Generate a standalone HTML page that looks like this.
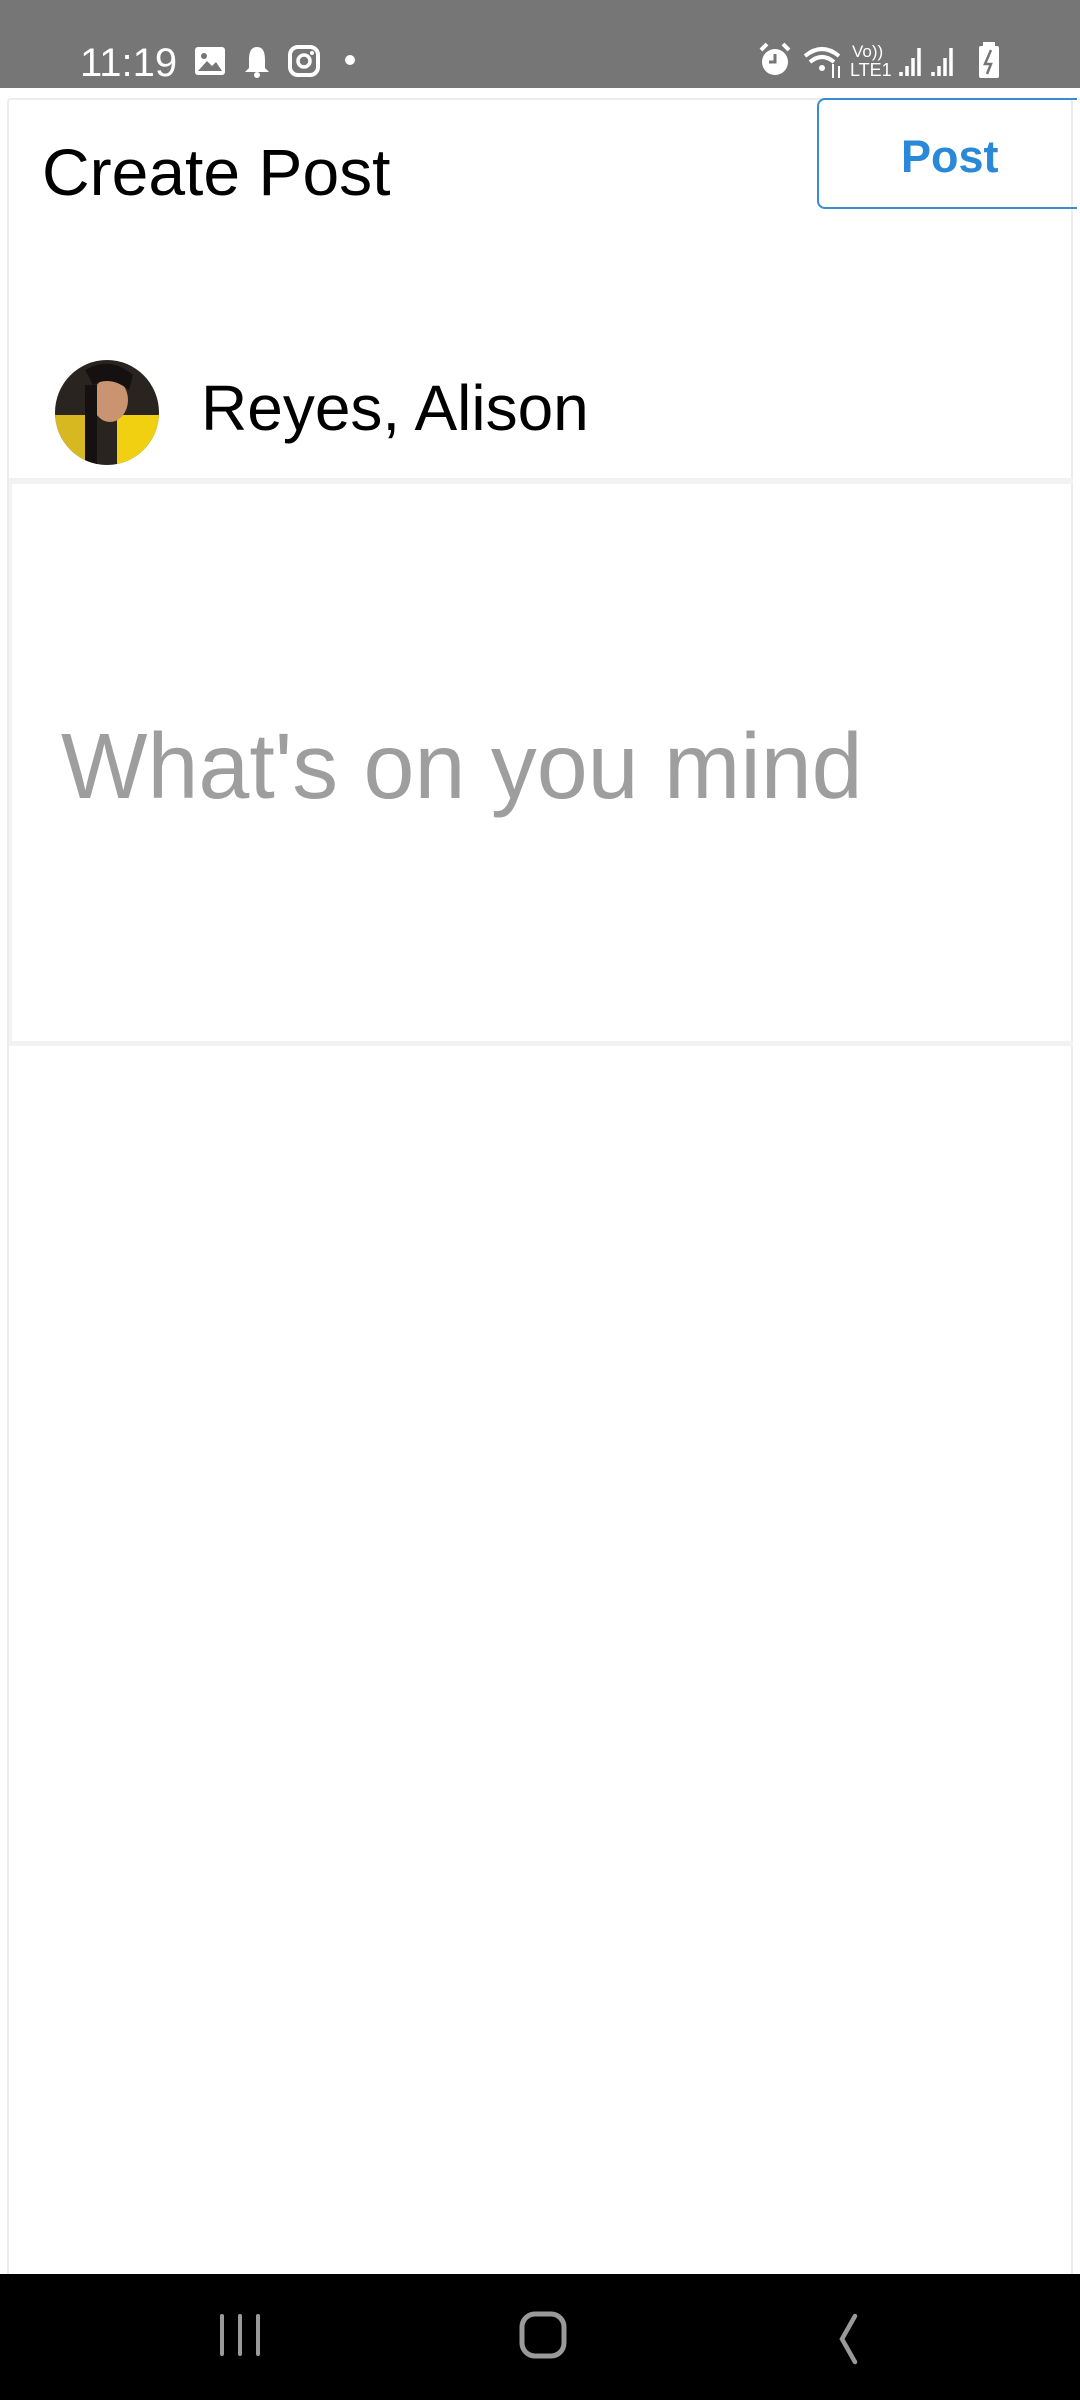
<!DOCTYPE html>
<html><head><meta charset="utf-8"><style>
*{margin:0;padding:0;box-sizing:border-box}
body{width:1080px;height:2400px;background:#fff;position:relative;overflow:hidden;font-family:"Liberation Sans",sans-serif}
.abs{position:absolute}
.sb{left:0;top:0;width:1080px;height:88px;background:#767676}
.card{left:7px;top:98px;width:1066px;height:2176px;border:2px solid #ececec;border-bottom:none;border-radius:4px 4px 0 0}
.t{white-space:nowrap;line-height:1}
.nav{left:0;top:2274px;width:1080px;height:126px;background:#000}
</style></head><body>
<div class="abs sb"></div>
<div class="abs t" style="left:80px;top:43px;font-size:40px;color:#fff">11:19</div>
<div class="abs" style="left:195px;top:47px;width:30px;height:28px;background:#fff;border-radius:3px"></div>
<svg class="abs" style="left:195px;top:47px" width="30" height="28"><circle cx="9" cy="9" r="3" fill="#767676"/><path d="M3 24 L12 14 L17 19 L21 15 L27 24Z" fill="#767676"/></svg>
<svg class="abs" style="left:242px;top:44px" width="30" height="36"><path d="M15 3 C8 3 7 10 7 16 L7 24 L3 28 L27 28 L23 24 L23 16 C23 10 22 3 15 3Z" fill="#fff"/><circle cx="15" cy="31" r="3" fill="#fff"/></svg>
<svg class="abs" style="left:287px;top:44px" width="34" height="34"><rect x="3" y="3" width="28" height="28" rx="8" fill="none" stroke="#fff" stroke-width="4"/><circle cx="17" cy="17" r="6" fill="none" stroke="#fff" stroke-width="3.5"/><circle cx="25" cy="9" r="2" fill="#fff"/></svg>
<div class="abs" style="left:345px;top:55px;width:10px;height:10px;border-radius:50%;background:#fff"></div>
<svg class="abs" style="left:755px;top:40px" width="250" height="42">
<circle cx="20" cy="22" r="13" fill="#fff"/><path d="M14 22 L20 22 L20 14" stroke="#767676" stroke-width="3" fill="none"/>
<path d="M6 10 L12 4 M34 10 L28 4" stroke="#fff" stroke-width="4"/>
<path d="M50 16 Q67 2 84 16" stroke="#fff" stroke-width="4" fill="none"/><path d="M55 22 Q67 12 79 22" stroke="#fff" stroke-width="4" fill="none"/><circle cx="67" cy="28" r="3" fill="#fff"/>
<path d="M78 24 L78 38 M84 38 L84 26" stroke="#fff" stroke-width="2"/>
<text x="97" y="17" font-size="17" fill="#fff" font-family="Liberation Sans">Vo))</text>
<text x="95" y="36" font-size="18" fill="#fff" font-family="Liberation Sans">LTE1</text>
<path d="M146 36 V32 M152 36 V26 M158 36 V18 M164 36 V8" stroke="#fff" stroke-width="3.5"/>
<path d="M178 36 V32 M184 36 V26 M190 36 V18 M196 36 V8" stroke="#fff" stroke-width="3.5"/>
<rect x="224" y="6" width="20" height="32" rx="2" fill="#fff"/><rect x="228" y="2" width="12" height="5" fill="#fff"/><path d="M236 10 L230 24 L236 24 L232 34" stroke="#767676" stroke-width="2.5" fill="none"/>
</svg>
<div class="abs card"></div>
<div class="abs t" style="left:42px;top:139px;font-size:66px;color:#000">Create Post</div>
<div class="abs" style="left:817px;top:98px;width:260px;height:111px;border:2px solid #3a8bd0;border-right:none;border-radius:8px 0 0 8px"></div>
<div class="abs t" style="left:901px;top:134px;font-size:45px;font-weight:bold;color:#2a88d8">Post</div>
<svg class="abs" style="left:55px;top:360px" width="104" height="105">
<defs><clipPath id="c"><ellipse cx="52" cy="52.5" rx="52" ry="52.5"/></clipPath></defs>
<g clip-path="url(#c)"><rect width="104" height="105" fill="#2a2420"/>
<rect x="0" y="55" width="30" height="50" fill="#d8b820"/>
<rect x="62" y="55" width="42" height="50" fill="#f0d010"/>
<ellipse cx="55" cy="40" rx="18" ry="22" fill="#c9946f"/>
<path d="M30 10 Q55 -5 78 15 L74 30 Q55 15 38 25Z" fill="#151110"/>
<rect x="30" y="25" width="12" height="80" fill="#151110"/>
</g></svg>
<div class="abs t" style="left:201px;top:376px;font-size:64px;color:#000">Reyes, Alison</div>
<div class="abs" style="left:9px;top:478px;width:1064px;height:6px;background:#f2f2f2"></div>
<div class="abs" style="left:9px;top:484px;width:3px;height:560px;background:#f2f2f2"></div>
<div class="abs" style="left:9px;top:1041px;width:1064px;height:5px;background:#f2f2f2"></div>
<div class="abs t" style="left:61px;top:720px;font-size:93px;color:#9e9e9e;transform:scaleX(0.985);transform-origin:left">What's on you mind</div>
<div class="abs nav"></div>
<svg class="abs" style="left:0;top:2274px" width="1080" height="126">
<path d="M222 42 V80 M240 42 V80 M258 42 V80" stroke="#9a9a9a" stroke-width="4" stroke-linecap="round"/>
<rect x="522" y="40" width="42" height="42" rx="13" fill="none" stroke="#9a9a9a" stroke-width="5"/>
<path d="M855 42 L842 65 L855 88" stroke="#9a9a9a" stroke-width="4.5" fill="none" stroke-linecap="round"/>
</svg>
</body></html>
